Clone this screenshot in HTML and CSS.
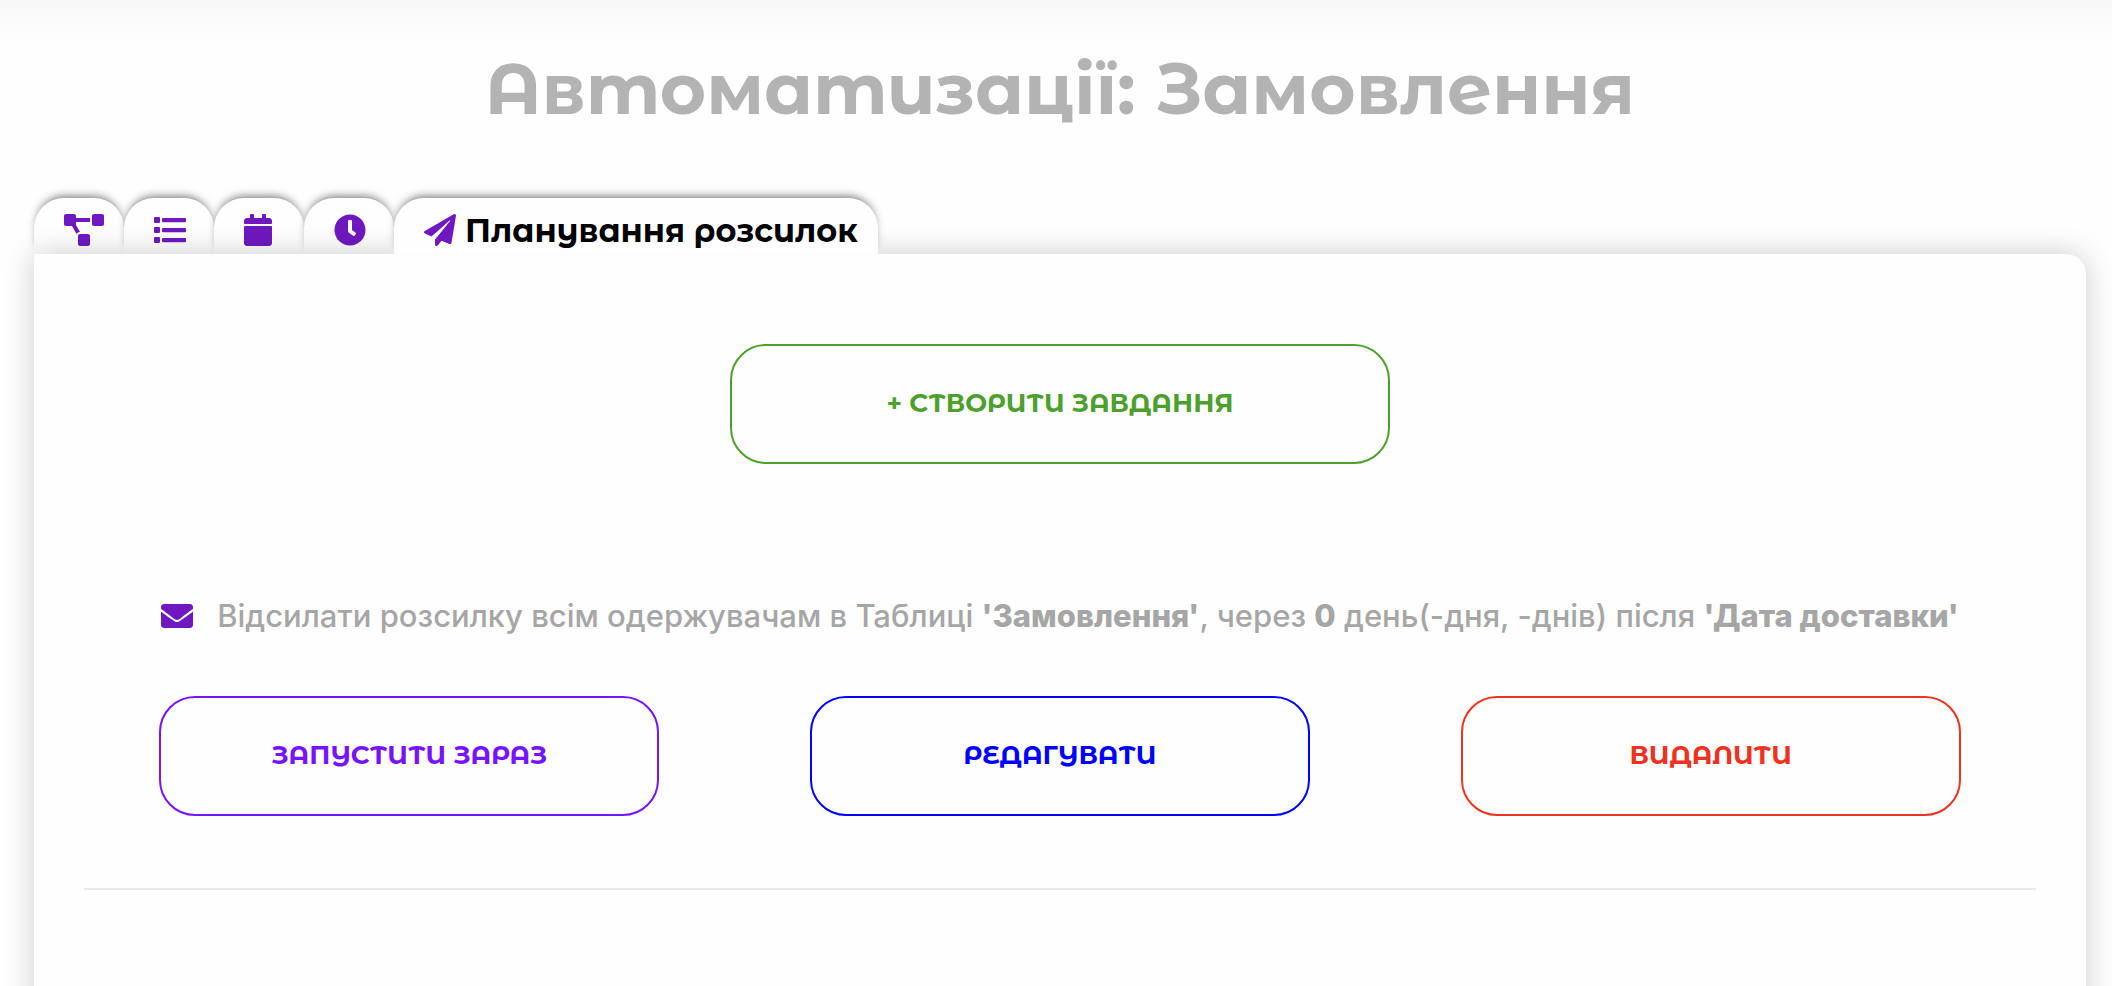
FILE: index.html
```html
<!DOCTYPE html>
<html lang="uk">
<head>
<meta charset="utf-8">
<meta name="viewport" content="width=device-width, initial-scale=1">
<title>Автоматизації: Замовлення</title>
<link rel="stylesheet" href="styles.css">
</head>
<body>
<main class="page">
  <h1 class="title">Автоматизації: Замовлення</h1>
  <nav class="tabs">
    <button class="tab" type="button" aria-label="Схема">
      <svg class="icon" viewBox="0 0 640 512" width="40" height="32"><path d="M384 320H256c-17.67 0-32 14.33-32 32v128c0 17.67 14.33 32 32 32h128c17.67 0 32-14.33 32-32V352c0-17.67-14.33-32-32-32zM192 32c0-17.67-14.33-32-32-32H32C14.33 0 0 14.33 0 32v128c0 17.67 14.33 32 32 32h95.72l73.16 128.04C211.98 300.98 232.4 288 256 288h.28L192 175.51V128h224V64H192V32zM608 0H480c-17.67 0-32 14.33-32 32v128c0 17.67 14.33 32 32 32h128c17.67 0 32-14.33 32-32V32c0-17.67-14.33-32-32-32z"/></svg>
    </button>
    <button class="tab" type="button" aria-label="Список">
      <svg class="icon" viewBox="0 0 512 512" width="32" height="32"><path d="M80 368H16a16 16 0 0 0-16 16v64a16 16 0 0 0 16 16h64a16 16 0 0 0 16-16v-64a16 16 0 0 0-16-16zm0-320H16A16 16 0 0 0 0 64v64a16 16 0 0 0 16 16h64a16 16 0 0 0 16-16V64a16 16 0 0 0-16-16zm0 160H16a16 16 0 0 0-16 16v64a16 16 0 0 0 16 16h64a16 16 0 0 0 16-16v-64a16 16 0 0 0-16-16zm416 176H144a16 16 0 0 0-16 16v36a16 16 0 0 0 16 16h352a16 16 0 0 0 16-16v-36a16 16 0 0 0-16-16zm0-320H144a16 16 0 0 0-16 16v36a16 16 0 0 0 16 16h352a16 16 0 0 0 16-16V80a16 16 0 0 0-16-16zm0 160H144a16 16 0 0 0-16 16v36a16 16 0 0 0 16 16h352a16 16 0 0 0 16-16v-36a16 16 0 0 0-16-16z"/></svg>
    </button>
    <button class="tab" type="button" aria-label="Календар">
      <svg class="icon" viewBox="0 0 448 512" width="28" height="32"><path d="M12 192h424c6.6 0 12 5.4 12 12v260c0 26.5-21.5 48-48 48H48c-26.5 0-48-21.5-48-48V204c0-6.6 5.4-12 12-12zm436-44v-36c0-26.5-21.5-48-48-48h-48V12c0-6.6-5.4-12-12-12h-40c-6.6 0-12 5.4-12 12v52H160V12c0-6.6-5.4-12-12-12h-40c-6.6 0-12 5.4-12 12v52H48C21.5 64 0 85.5 0 112v36c0 6.6 5.4 12 12 12h424c6.6 0 12-5.4 12-12z"/></svg>
    </button>
    <button class="tab" type="button" aria-label="Час">
      <svg class="icon" viewBox="0 0 512 512" width="32" height="32"><path d="M256,8C119,8,8,119,8,256S119,504,256,504,504,393,504,256,393,8,256,8Zm92.49,313h0l-20,25a16,16,0,0,1-22.49,2.5h0l-67-49.72a40,40,0,0,1-15-31.23V112a16,16,0,0,1,16-16h32a16,16,0,0,1,16,16V256l58,42.5A16,16,0,0,1,348.49,321Z"/></svg>
    </button>
    <button class="tab tab-active" type="button" aria-current="page">
      <svg class="icon" viewBox="0 0 512 512" width="32" height="32"><path d="M476 3.2L12.5 270.6c-18.1 10.4-15.8 35.6 2.2 43.2L121 358.4l287.3-253.2c5.5-4.9 13.3 2.6 8.6 8.3L176 407v80.5c0 23.6 28.5 32.9 42.5 15.8L282 426l124.6 52.2c14.2 6 30.4-2.9 33-18.2l72-432C515 7.8 493.3-6.8 476 3.2z"/></svg>
      <span class="tab-label">Планування розсилок</span>
    </button>
  </nav>
  <section class="panel">
    <button class="action action-create" type="button">+ СТВОРИТИ ЗАВДАННЯ</button>
    <article class="task">
      <div class="summary">
        <svg class="icon" viewBox="0 0 512 512" width="32" height="32" aria-hidden="true"><path d="M502.3 190.8c3.9-3.1 9.7-.2 9.7 4.7V400c0 26.5-21.5 48-48 48H48c-26.5 0-48-21.5-48-48V195.6c0-5 5.7-7.8 9.7-4.7 22.4 17.4 52.1 39.5 154.1 113.6 21.1 15.4 56.7 47.8 92.2 47.6 35.7.3 72-32.8 92.3-47.6 102-74.1 131.6-96.3 154-113.7zM256 320c23.2.4 56.6-29.2 73.4-41.4 132.7-96.3 142.8-104.7 173.4-128.7 5.8-4.5 9.2-11.5 9.2-18.9v-19c0-26.5-21.5-48-48-48H48c-26.5 0-48 21.5-48 48v19c0 7.4 3.4 14.3 9.2 18.9 30.6 23.9 40.7 32.4 173.4 128.7 16.8 12.2 50.2 41.8 73.4 41.4z"/></svg>
        <p class="summary-text">Відсилати розсилку всім одержувачам в Таблиці <strong>'Замовлення'</strong>, через <strong>0</strong> день(-дня, -днів) після <strong>'Дата доставки'</strong></p>
      </div>
      <div class="actions">
        <button class="action action-run" type="button">ЗАПУСТИТИ ЗАРАЗ</button>
        <button class="action action-edit" type="button">РЕДАГУВАТИ</button>
        <button class="action action-delete" type="button">ВИДАЛИТИ</button>
      </div>
    </article>
  </section>
</main>
</body>
</html>
```
FILE: styles.css
```css
* {
  box-sizing: border-box;
}

body {
  margin: 0;
  min-height: 100vh;
  background: #fefefe linear-gradient(#f8f8f8, #fefefe 48px) no-repeat;
  font-family: Inter, "Open Sans", sans-serif;
}

.page {
  display: flex;
  flex-direction: column;
  min-height: 100vh;
  padding: 44px 26px 0 34px;
  overflow: clip;
}

.title {
  margin: 0 0 64px;
  color: #b3b3b3;
  font-family: "Montserrat Alternates", Montserrat, Inter, sans-serif;
  font-size: 71px;
  font-weight: 700;
  line-height: 90px;
  text-align: center;
}

.tabs {
  display: flex;
}

.tab {
  display: flex;
  align-items: center;
  gap: 9px;
  min-width: 90px;
  height: 56px;
  padding: 8px 20px 0 30px;
  border: 0;
  border-radius: 30px 30px 0 0;
  background: #fefefe;
  box-shadow: 0 -5px 10px -4px rgba(0, 0, 0, 0.6);
  color: #000;
  font-family: "Montserrat Alternates", Montserrat, Inter, sans-serif;
  font-size: 32px;
  font-weight: 700;
  line-height: 40px;
  white-space: nowrap;
  cursor: pointer;
}

.tab-active {
  z-index: 2;
}

.tab-label {
  padding-top: 2px;
}

.icon {
  flex: none;
  fill: #6f18bf;
}

.panel {
  z-index: 1;
  flex: 1;
  margin-bottom: -40px;
  padding: 90px 50px 40px;
  border-radius: 0 20px 0 0;
  background: #fefefe;
  box-shadow: 0 0 30px rgba(0, 0, 0, 0.2);
}

.action {
  width: 500px;
  height: 120px;
  padding: 0 0 2px;
  border: 2px solid currentColor;
  border-radius: 36px;
  background: transparent;
  font-family: "Montserrat Alternates", Montserrat, Inter, sans-serif;
  font-size: 26px;
  font-weight: 700;
  line-height: 36px;
  cursor: pointer;
}

.action-create {
  display: block;
  width: 660px;
  margin: 0 auto;
  color: #4ea02e;
}

.action-run {
  color: #7614ff;
}

.action-edit {
  color: #0000ff;
}

.action-delete {
  color: #ed3222;
}

.task {
  padding: 132px 0 72px;
  border-bottom: 2px solid #e9e9ed;
}

.summary {
  display: flex;
  align-items: center;
  justify-content: center;
  gap: 24px;
  margin-bottom: 60px;
}

.summary-text {
  margin: 0;
  color: #a6a6a6;
  font-size: 31px;
  font-weight: 500;
  line-height: 40px;
}

.summary-text strong {
  font-weight: 800;
}

.actions {
  display: flex;
  justify-content: space-around;
}
```
